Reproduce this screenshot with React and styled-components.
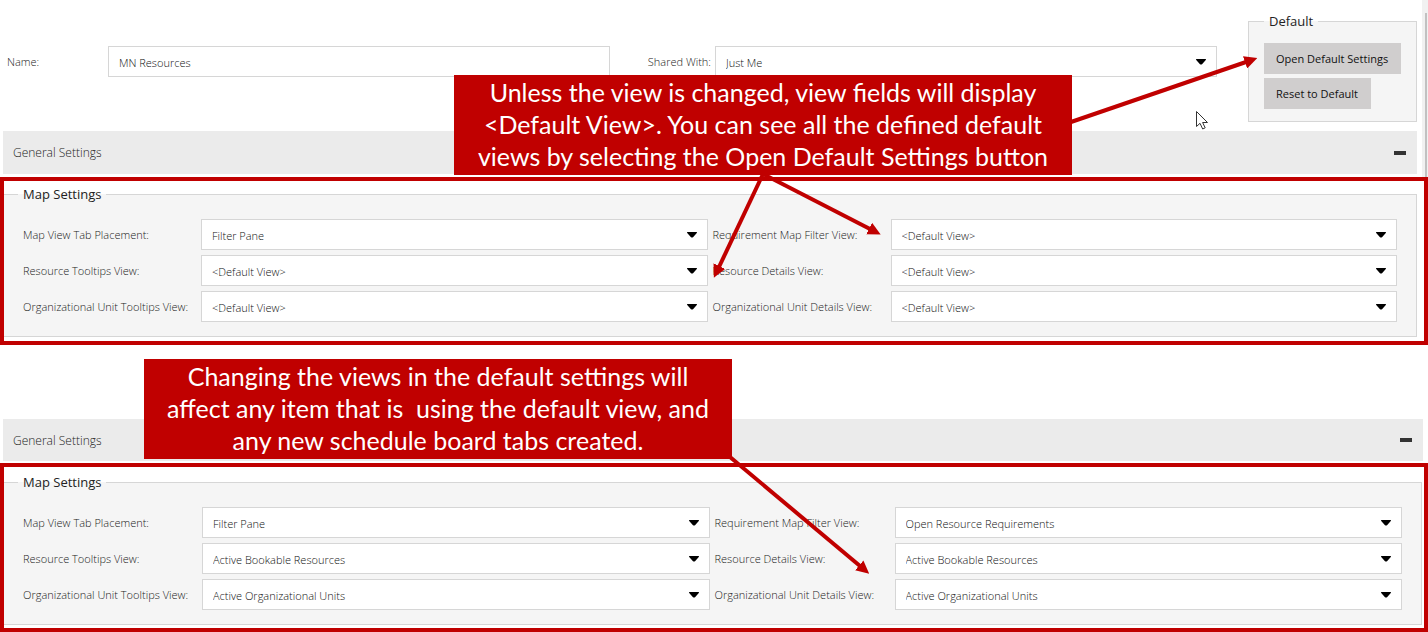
import React, { useId } from "react";
import styled, { createGlobalStyle } from "styled-components";

const red = "#c00000";
const uiFont = `"Open Sans", "Noto Sans", sans-serif`;

const GlobalStyle = createGlobalStyle`
  *, *::before, *::after { box-sizing: border-box; }
  body {
    margin: 0;
    background: #fff;
    color: #222;
    font-family: ${uiFont};
    font-size: 11px;
    overflow-x: hidden;
  }
`;

const Page = styled.main`
  position: relative;
  display: flow-root;
`;

const TopPane = styled.section`
  display: flex;
  height: 177px;
`;

const TopContent = styled.div`
  flex: 1;
  min-width: 0;
  padding-right: 5px;
`;

const ScrollTrack = styled.div`
  width: 6px;
  padding: 13px 1px 0 3px;
  background: #f1f1f1;
`;

const ScrollThumb = styled.div`
  height: 100%;
  background: #c1c1c1;
`;

const HeaderRow = styled.div`
  display: grid;
  grid-template-columns: 101px 1fr 105px 1fr 31px 169px;
  height: 131px;
  padding: 11px 0 0 7px;
`;

const HeaderCell = styled.div`
  padding-top: 35px;
`;

const Label = styled.label`
  display: block;
  padding-right: ${(p) => (p.$end ? "4px" : "0")};
  line-height: 31px;
  font-weight: 300;
  text-align: ${(p) => (p.$end ? "right" : "left")};
  white-space: nowrap;
`;

const boxStyle = `
  width: 100%;
  height: 31px;
  padding: 2px 10px 0;
  border: 1px solid #d6d6d6;
  border-radius: 0;
  background: #fff;
  color: #111;
  font-family: ${uiFont};
  font-size: 11px;
  font-weight: 300;
`;

const TextInput = styled.input`
  ${boxStyle}
`;

const SelectBox = styled.div`
  display: grid;
  grid-template-columns: 1fr 21px;
  align-items: center;

  select {
    grid-area: 1 / 1 / 2 / 3;
    appearance: none;
    ${boxStyle}
  }
  svg {
    grid-area: 1 / 2;
    z-index: 1;
    pointer-events: none;
  }
`;

const Group = styled.fieldset`
  min-width: 0;
  margin: 0;
  border: 1px solid #d6d6d6;
  background: #f5f5f5;
`;

const DefaultGroup = styled(Group)`
  display: flex;
  flex-direction: column;
  align-items: flex-start;
  gap: 4px;
  height: 111px;
  padding: 12px 14px 0 15px;
`;

const MapGroup = styled(Group)`
  padding: 15px 19px 14px 14px;
  border-left: 0;
`;

const Legend = styled.legend`
  height: 20px;
  padding: 0 5px;
  line-height: 20px;
  font-size: 13px;
`;

const GrayButton = styled.button`
  height: 31px;
  padding: 0 13px 0 12px;
  border: 0;
  background: #d0cece;
  color: #111;
  font-family: ${uiFont};
  font-size: 11px;
  white-space: nowrap;
`;

const SectionBar = styled.header`
  display: flex;
  align-items: center;
  justify-content: space-between;
  height: ${(p) => (p.$second ? "42px" : "43px")};
  margin: ${(p) => (p.$second ? "74px 5px 2px 3px" : "0 0 3px 3px")};
  padding: 0 11px 0 10px;
  background: #ebebeb;
`;

const SectionTitle = styled.h2`
  margin: 0;
  font-size: 12px;
  font-weight: 300;
`;

const CollapseButton = styled.button`
  display: flex;
  align-items: center;
  height: 20px;
  padding: 0;
  border: 0;
  background: none;

  &::before {
    content: "";
    width: 12px;
    height: 4px;
    background: #333;
  }
`;

const Highlight = styled.section`
  padding: ${(p) => (p.$second ? "5px 2px 3px 0" : "3px 7px 4px 0")};
  border: 4px solid ${red};
`;

const FieldGrid = styled.div`
  display: grid;
  grid-template-columns: ${(p) =>
    p.$second ? "179px 1fr 185px 1fr" : "178px 1fr 183px 1fr"};
  row-gap: 5px;
  padding-left: 5px;

  label:nth-child(4n + 3) {
    padding-left: 5px;
  }
`;

const Callout = styled.aside`
  position: absolute;
  top: ${(p) => p.$top}px;
  left: ${(p) => p.$left}px;
  width: ${(p) => p.$width}px;
  height: 100px;
  padding-top: 1px;
  background: ${red};
  color: #fff;
  font-family: Lato, sans-serif;
  font-size: 25px;
  line-height: 32px;
  text-align: center;
  white-space: pre;
`;

const Arrows = styled.svg`
  position: absolute;
  top: 0;
  left: 0;
  pointer-events: none;
`;

function Caret() {
  return (
    <svg width="10" height="6" viewBox="0 0 10 6" aria-hidden="true">
      <path d="M0.5 0h9a.5.5 0 0 1 .3.9L6 5.2q-1 .8-2 0L.2.9A.5.5 0 0 1 .5 0z" fill="#000" />
    </svg>
  );
}

function Select({ id, value }) {
  return (
    <SelectBox>
      <select id={id} defaultValue={value}>
        <option>{value}</option>
      </select>
      <Caret />
    </SelectBox>
  );
}

function Field({ label, value }) {
  const id = useId();
  return (
    <>
      <Label htmlFor={id}>{label}</Label>
      <Select id={id} value={value} />
    </>
  );
}

function GeneralBar({ second }) {
  return (
    <SectionBar $second={second}>
      <SectionTitle>General Settings</SectionTitle>
      <CollapseButton type="button" aria-label="Collapse General Settings" />
    </SectionBar>
  );
}

function MapSettings({ fields, second }) {
  return (
    <Highlight $second={second}>
      <MapGroup>
        <Legend>Map Settings</Legend>
        <FieldGrid $second={second}>
          {fields.map(([label, value]) => (
            <Field key={label} label={label} value={value} />
          ))}
        </FieldGrid>
      </MapGroup>
    </Highlight>
  );
}

const boardFields = [
  ["Map View Tab Placement:", "Filter Pane"],
  ["Requirement Map Filter View:", "<Default View>"],
  ["Resource Tooltips View:", "<Default View>"],
  ["Resource Details View:", "<Default View>"],
  ["Organizational Unit Tooltips View:", "<Default View>"],
  ["Organizational Unit Details View:", "<Default View>"],
];

const defaultFields = [
  ["Map View Tab Placement:", "Filter Pane"],
  ["Requirement Map Filter View:", "Open Resource Requirements"],
  ["Resource Tooltips View:", "Active Bookable Resources"],
  ["Resource Details View:", "Active Bookable Resources"],
  ["Organizational Unit Tooltips View:", "Active Organizational Units"],
  ["Organizational Unit Details View:", "Active Organizational Units"],
];

const arrows = [
  "M1071 122L1246 62",
  "M763 174L719 267",
  "M763 174L870 229",
  "M730 457L860 566",
];

export default function App() {
  return (
    <Page>
      <GlobalStyle />
      <TopPane>
        <TopContent>
          <HeaderRow>
            <HeaderCell>
              <Label htmlFor="name">Name:</Label>
            </HeaderCell>
            <HeaderCell>
              <TextInput id="name" defaultValue="MN Resources" />
            </HeaderCell>
            <HeaderCell>
              <Label htmlFor="shared" $end>Shared With:</Label>
            </HeaderCell>
            <HeaderCell>
              <Select id="shared" value="Just Me" />
            </HeaderCell>
            <span />
            <DefaultGroup>
              <Legend>Default</Legend>
              <GrayButton type="button">Open Default Settings</GrayButton>
              <GrayButton type="button">Reset to Default</GrayButton>
            </DefaultGroup>
          </HeaderRow>
          <GeneralBar />
        </TopContent>
        <ScrollTrack>
          <ScrollThumb />
        </ScrollTrack>
      </TopPane>
      <MapSettings fields={boardFields} />

      <GeneralBar second />
      <MapSettings fields={defaultFields} second />

      <Callout $top={75} $left={454} $width={618}>
        {"Unless the view is changed, view fields will display\n<Default View>. You can see all the defined default\nviews by selecting the Open Default Settings button"}
      </Callout>
      <Callout $top={359} $left={144} $width={588}>
        {"Changing the views in the default settings will\naffect any item that is  using the default view, and\nany new schedule board tabs created."}
      </Callout>
      <Arrows width="1428" height="632" viewBox="0 0 1428 632" aria-hidden="true">
        <defs>
          <marker id="head" markerUnits="userSpaceOnUse" markerWidth="13" markerHeight="13" refX="1" refY="6.5" orient="auto">
            <path d="M0 0L13 6.5L0 13z" fill={red} />
          </marker>
        </defs>
        {arrows.map((d) => (
          <path key={d} d={d} fill="none" stroke={red} strokeWidth="4" markerEnd="url(#head)" />
        ))}
        <path
          d="M1196.500 111.500v15l3.500-3.200 2.700 5.700 2.500-1.200-2.600-5.300h4.900z"
          fill="#fff"
          stroke="#333"
          strokeWidth="1"
        />
      </Arrows>
    </Page>
  );
}
